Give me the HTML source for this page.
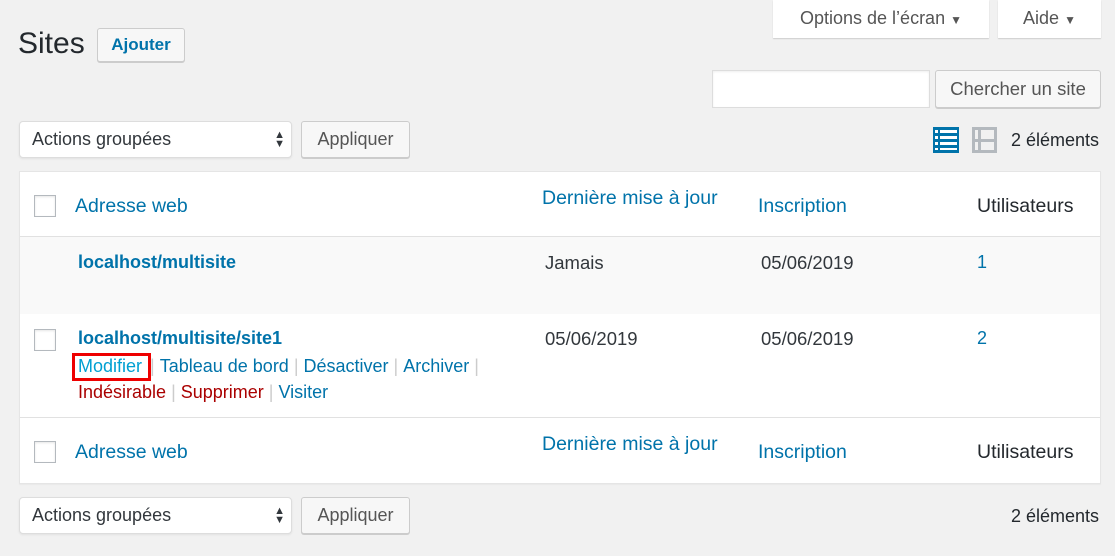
<!DOCTYPE html>
<html><head><meta charset="utf-8"><style>
*{box-sizing:border-box;margin:0;padding:0}
body{width:1115px;height:556px;background:#f1f1f1;font-family:"Liberation Sans",Arial,sans-serif;color:#23282d;position:relative;overflow:hidden;font-size:18px}
.a{position:absolute;white-space:nowrap}
.btn{position:absolute;background:#f7f7f7;border:1px solid #ccc;border-radius:3px;box-shadow:0 1px 0 #ccc;color:#555;font-size:18px;text-align:center}
.blue{color:#0073aa}
.red{color:#a00}
.cb{position:absolute;width:22px;height:22px;border:1px solid #b4b9be;background:#fff;box-shadow:inset 0 1px 2px rgba(0,0,0,.1)}
.sel{position:absolute;background:#fff;border:1px solid #ddd;border-radius:4px;box-shadow:0 1px 2px rgba(0,0,0,.07);font-size:18px;color:#32373c;padding-left:12px}
.sep{color:#ccc;margin:0 5px}
</style></head><body>
<div class="a" style="left:773px;top:0;width:216px;height:38px;background:#fff;box-shadow:0 1px 1px rgba(0,0,0,.15);color:#555;text-align:center;line-height:36px">Options de l’écran <span style="font-size:12px">▼</span></div>
<div class="a" style="left:998px;top:0;width:103px;height:38px;background:#fff;box-shadow:0 1px 1px rgba(0,0,0,.15);color:#555;text-align:center;line-height:36px">Aide <span style="font-size:12px">▼</span></div>
<div class="a" style="left:18px;top:27px;font-size:30px;color:#23282d">Sites</div>
<div class="btn" style="left:97px;top:28px;width:88px;height:34px;line-height:32px;color:#0073aa;font-weight:bold;font-size:17px">Ajouter</div>
<div class="a" style="left:712px;top:70px;width:218px;height:38px;background:#fff;border:1px solid #ddd;box-shadow:inset 0 1px 2px rgba(0,0,0,.07)"></div>
<div class="btn" style="left:935px;top:70px;width:166px;height:38px;line-height:36px;color:#555;font-size:18.5px">Chercher un site</div>
<div class="sel" style="left:19px;top:121px;width:273px;height:37px;line-height:35px">Actions groupées<span style="position:absolute;right:6px;top:0;font-size:11px;line-height:9px;padding-top:9px">▲<br>▼</span></div>
<div class="btn" style="left:301px;top:121px;width:109px;height:37px;line-height:35px">Appliquer</div>
<svg class="a" style="left:933px;top:127px" width="26" height="26" viewBox="0 0 26 26"><rect x="0" y="0" width="26" height="26" fill="#0073aa"/><g fill="#fff"><rect x="2" y="3" width="3" height="3"/><rect x="7" y="3" width="17" height="3"/><rect x="2" y="9" width="3" height="3"/><rect x="7" y="9" width="17" height="3"/><rect x="2" y="15" width="3" height="3"/><rect x="7" y="15" width="17" height="3"/><rect x="2" y="21" width="3" height="2"/><rect x="7" y="21" width="17" height="2"/></g></svg>
<svg class="a" style="left:972px;top:127px" width="25" height="26" viewBox="0 0 25 26"><rect x="1.5" y="1.5" width="22" height="23" fill="none" stroke="#b4b9be" stroke-width="3"/><rect x="1" y="12" width="23" height="3" fill="#b4b9be"/><rect x="6" y="1" width="3" height="24" fill="#b4b9be"/></svg>
<div class="a" style="left:1011px;top:130px">2 éléments</div>

<div class="a" style="left:19px;top:171px;width:1082px;height:313px;background:#fff;border:1px solid #e5e5e5;box-shadow:0 1px 1px rgba(0,0,0,.04)"></div>
<div class="a" style="left:20px;top:236px;width:1080px;height:1px;background:#e1e1e1"></div>
<div class="a" style="left:20px;top:237px;width:1080px;height:77px;background:#f9f9f9"></div>
<div class="a" style="left:20px;top:417px;width:1080px;height:1px;background:#e1e1e1"></div>

<div class="cb" style="left:34px;top:195px"></div>
<div class="a blue" style="left:75px;top:195px;font-size:19.5px">Adresse web</div>
<div class="a blue" style="left:542px;top:187px;font-size:19.5px">Dernière mise à jour</div>
<div class="a blue" style="left:758px;top:195px;font-size:19.5px">Inscription</div>
<div class="a" style="left:977px;top:195px;font-size:19.5px">Utilisateurs</div>

<div class="a blue" style="left:78px;top:252px;font-weight:bold;font-size:18px">localhost/multisite</div>
<div class="a" style="left:545px;top:252px;color:#32373c;font-size:18.5px">Jamais</div>
<div class="a" style="left:761px;top:252px;color:#32373c;font-size:18.5px">05/06/2019</div>
<div class="a blue" style="left:977px;top:252px;font-size:18px">1</div>

<div class="cb" style="left:34px;top:329px"></div>
<div class="a blue" style="left:78px;top:328px;font-weight:bold;font-size:18px">localhost/multisite/site1</div>
<div class="a" style="left:545px;top:328px;color:#32373c;font-size:18.5px">05/06/2019</div>
<div class="a" style="left:761px;top:328px;color:#32373c;font-size:18.5px">05/06/2019</div>
<div class="a blue" style="left:977px;top:328px;font-size:18px">2</div>
<div class="a" style="left:78px;top:356px;font-size:18px"><span style="color:#00a0d2">Modifier</span><span class="sep" style="margin-left:8px">|</span><span class="blue">Tableau de bord</span><span class="sep">|</span><span class="blue">Désactiver</span><span class="sep">|</span><span class="blue">Archiver</span><span class="sep">|</span></div>
<div class="a" style="left:72px;top:353px;width:79px;height:28px;border:3px solid #e00"></div>
<div class="a" style="left:78px;top:382px;font-size:18px"><span class="red">Indésirable</span><span class="sep">|</span><span class="red">Supprimer</span><span class="sep">|</span><span class="blue">Visiter</span></div>

<div class="cb" style="left:34px;top:441px"></div>
<div class="a blue" style="left:75px;top:441px;font-size:19.5px">Adresse web</div>
<div class="a blue" style="left:542px;top:433px;font-size:19.5px">Dernière mise à jour</div>
<div class="a blue" style="left:758px;top:441px;font-size:19.5px">Inscription</div>
<div class="a" style="left:977px;top:441px;font-size:19.5px">Utilisateurs</div>

<div class="sel" style="left:19px;top:497px;width:273px;height:37px;line-height:35px">Actions groupées<span style="position:absolute;right:6px;top:0;font-size:11px;line-height:9px;padding-top:9px">▲<br>▼</span></div>
<div class="btn" style="left:301px;top:497px;width:109px;height:37px;line-height:35px">Appliquer</div>
<div class="a" style="left:1011px;top:506px">2 éléments</div>
</body></html>
